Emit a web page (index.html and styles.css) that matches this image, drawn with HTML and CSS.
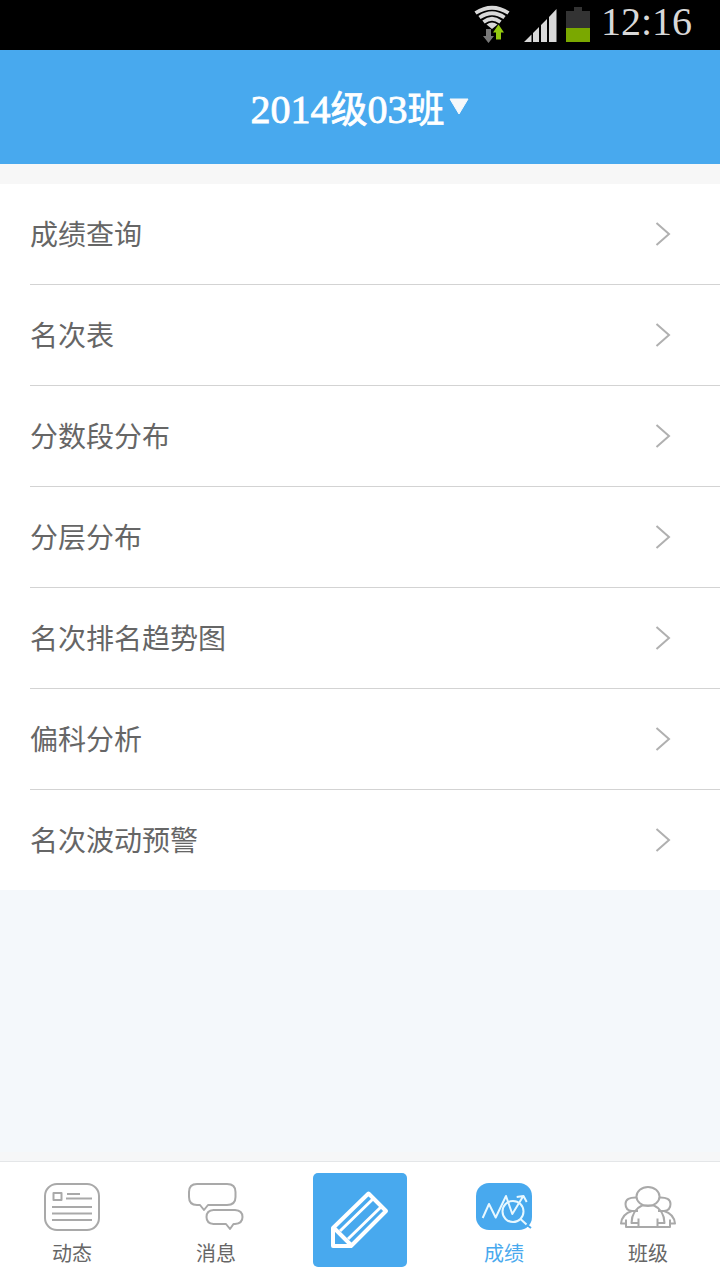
FILE: index.html
```html
<!DOCTYPE html>
<html lang="zh-CN">
    <head>
        <meta charset="UTF-8">
        <meta name="viewport" content="width=device-width, initial-scale=1.0">
        <title>成绩</title>
        <link rel="stylesheet" href="styles.css">
    </head>
    <body>
        <div class="status-bar">
            <svg class="wifi" width="36" height="38" viewBox="0 0 36 38">
                <g fill="none" stroke="#d8d8d8" stroke-width="3.800">
                    <path d="M1.500 8Q18-2.500 34.500 8"/>
                    <path d="M5.500 12.500Q18 4 30.500 12.500"/>
                    <path d="M9.500 17Q18 10.500 26.500 17"/>
                </g>
                <path d="M12.500 19.500Q18 15.500 23.500 19.500L18 24Z" fill="#d8d8d8"/>
                <path d="M12 24h5v7h3l-5.500 7-5.500-7h3z" fill="#777"/>
                <path d="M22 34.500h5v-7h3l-5.500-8-5.500 8h3z" fill="#93c90f"/>
            </svg>
            <svg class="signal" width="34" height="34" viewBox="0 0 34 34">
                <path d="M0 34L7.500 26.500V34zM9 25L15 19V34H9zM17 17L23 11V34H17zM25 9L32.500 1V34H25z" fill="#d8d8d8"/>
            </svg>
            <svg class="battery" width="24" height="35" viewBox="0 0 24 35">
                <path d="M0 4h8V0h8v4h8v17H0z" fill="#333"/>
                <path d="M0 21h24v14H0z" fill="#7aa800"/>
            </svg>
            <span class="clock">12:16</span>
        </div>

        <div class="header">
            <div class="class-name"><span class="num">2014</span>级<span class="num">03</span>班</div>
            <svg class="caret" width="22" height="18" viewBox="0 0 22 18">
                <path d="M2 1H20L11 16Z" fill="#f6f8fa" stroke="#f6f8fa" stroke-linejoin="round"/>
            </svg>
        </div>

        <ul class="menu">
            <li><span>成绩查询</span><svg class="arrow" viewBox="0 0 16 26"><path d="M1.500 2L14 13L1.500 24"/></svg></li>
            <li><span>名次表</span><svg class="arrow" viewBox="0 0 16 26"><path d="M1.500 2L14 13L1.500 24"/></svg></li>
            <li><span>分数段分布</span><svg class="arrow" viewBox="0 0 16 26"><path d="M1.500 2L14 13L1.500 24"/></svg></li>
            <li><span>分层分布</span><svg class="arrow" viewBox="0 0 16 26"><path d="M1.500 2L14 13L1.500 24"/></svg></li>
            <li><span>名次排名趋势图</span><svg class="arrow" viewBox="0 0 16 26"><path d="M1.500 2L14 13L1.500 24"/></svg></li>
            <li><span>偏科分析</span><svg class="arrow" viewBox="0 0 16 26"><path d="M1.500 2L14 13L1.500 24"/></svg></li>
            <li><span>名次波动预警</span><svg class="arrow" viewBox="0 0 16 26"><path d="M1.500 2L14 13L1.500 24"/></svg></li>
        </ul>

        <div class="tab-bar">
            <div class="tab">
                <svg width="60" height="52" viewBox="0 0 60 52">
                    <rect x="3" y="4" width="54" height="46" rx="12"/>
                    <rect x="11.500" y="13" width="8" height="7"/>
                    <path d="M25 14H38M24 18.500H50M10 27H50M10 33.500H50M10 40H50"/>
                </svg>
                <span>动态</span>
            </div>
            <div class="tab">
                <svg width="60" height="52" viewBox="0 0 60 52">
                    <path d="M11 4H41Q49.500 4 49.500 12V17Q49.500 25 41 25H22L18 30L14 25H11Q3 25 3 17V12Q3 4 11 4Z"/>
                    <path d="M27.500 30H49Q56.500 30.500 56.500 37Q56.500 43.500 49 44H47.500L44 49L40 44H27.500Q20.500 43.500 20.500 37Q20.500 30.500 27.500 30Z"/>
                </svg>
                <span>消息</span>
            </div>
            <div class="tab">
                <div class="write">
                    <svg width="94" height="94" viewBox="0 0 94 94">
                        <path d="M20 55L55.500 20.500L73 38L38 73H20ZM21 55L38 72" stroke-width="4"/>
                        <path d="M27 58L61 25M35 66L69 33" stroke-width="3"/>
                    </svg>
                </div>
            </div>
            <div class="tab active">
                <svg width="60" height="52" viewBox="0 0 60 52">
                    <rect class="fill" x="2" y="3" width="56" height="47" rx="13"/>
                    <path d="M8.700 38L15 24L21.700 37.500L32 16L38.300 34L48.700 17M42.700 17L49.500 16L52.700 22"/>
                    <circle cx="39" cy="31.500" r="10.500"/>
                    <path d="M46.500 39L52.500 44.500"/>
                    <path class="handle" d="M53 45L57 48"/>
                </svg>
                <span>成绩</span>
            </div>
            <div class="tab">
                <svg width="60" height="52" viewBox="0 0 60 52">
                    <ellipse cx="30" cy="16.500" rx="11.500" ry="9.500"/>
                    <path d="M19 17.500Q7.500 17 7.500 24Q7.500 30.500 14 31H20M41 17.500Q52.500 17 52.500 24Q52.500 30.500 46 31H40"/>
                    <path d="M24 25.500Q14 30 13.500 43H20.500M36 25.500Q46 30 46.500 43H39.500M20.500 38.500V47M39.500 38.500V47"/>
                    <path d="M24 25.500H36M14 31Q4 34 3 43.500H8M46 31Q56 34 57 43.500H52M8 39.500V47H52V39.500"/>
                </svg>
                <span>班级</span>
            </div>
        </div>
    </body>
</html>
```
FILE: styles.css
```css
* {
    box-sizing: border-box;
}
body {
    margin: 0;
    height: 1280px;
    display: flex;
    flex-direction: column;
    background-color: #f4f8fb;
    font-family: "Liberation Serif", "Noto Sans CJK SC", serif;
    color: #666;
    overflow: hidden;
}
.status-bar {
    height: 50px;
    padding: 0 27px 0 0;
    display: flex;
    justify-content: flex-end;
    align-items: flex-start;
    background-color: #000;
}
.wifi {
    margin: 5px 14px 0 0;
}
.signal {
    margin: 8px 8px 0 0;
}
.battery {
    margin: 7px 11px 0 0;
}
.clock {
    width: 92px;
    font-size: 40px;
    line-height: 44px;
    color: #d8d8d8;
    white-space: nowrap;
}
.header {
    height: 114px;
    padding-top: 6px;
    display: flex;
    justify-content: center;
    align-items: center;
    background-color: #48a9ee;
    color: #fff;
}
.class-name {
    font-size: 37px;
    line-height: 50px;
    -webkit-text-stroke: 0.8px #fff;
}
.num {
    font-size: 40px;
}
.caret {
    margin: 0 0 6px 3px;
}
.menu {
    list-style: none;
    margin: 0;
    padding: 0 0 0 30px;
    border-top: 20px solid #f7f7f7;
    background-color: #fff;
}
.menu li {
    height: 101px;
    padding-right: 49px;
    display: flex;
    justify-content: space-between;
    align-items: center;
    border-bottom: 1px solid #d3d3d3;
    font-size: 28px;
    line-height: 40px;
}
.menu li:last-child {
    height: 100px;
    border-bottom: none;
}
.menu span {
    padding-top: 4px;
}
.arrow {
    width: 16px;
    height: 26px;
    fill: none;
    stroke: #b0b0b0;
    stroke-width: 2;
}
.tab-bar {
    height: 119px;
    margin-top: auto;
    display: flex;
    border-top: 1px solid #e4e6e8;
    background-color: #fff;
    box-shadow: 0 -9px #f6f7f8;
}
.tab {
    flex: 1;
    padding-top: 18px;
    display: flex;
    flex-direction: column;
    align-items: center;
    font-size: 20px;
    line-height: 30px;
}
.tab svg {
    fill: none;
    stroke: #a9a9a9;
    stroke-width: 2;
    stroke-linejoin: round;
}
.tab span {
    margin-top: 7px;
}
.write {
    width: 94px;
    height: 94px;
    margin-top: -7px;
    border-radius: 5px;
    background-color: #48a9ee;
}
.tab .write svg {
    display: block;
    stroke: #fff;
}
.active {
    color: #48a9ee;
}
.tab.active svg {
    stroke: #e8f8ff;
}
.tab .fill {
    fill: #48a9ee;
    stroke: none;
}
.tab .handle {
    stroke: #48a9ee;
}
```
